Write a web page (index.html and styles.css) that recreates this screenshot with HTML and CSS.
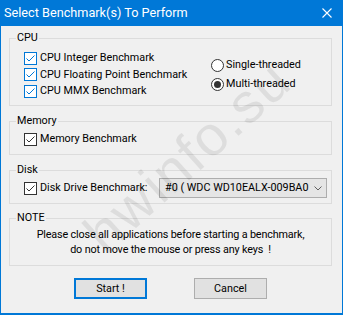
FILE: index.html
```html
<!DOCTYPE html>
<html>
<head>
<meta charset="utf-8">
<link rel="stylesheet" href="styles.css">
</head>
<body>
<div class="window">
  <header class="titlebar">
    <span class="title">Select Benchmark(s) To Perform</span>
    <svg class="close" width="10" height="10" viewBox="0 0 10 10"><path d="M0.5 0.5L9.5 9.5M9.5 0.5L0.5 9.5" stroke="#fff" stroke-width="1.1" fill="none"/></svg>
  </header>
  <main class="content">
    <fieldset class="group group-cpu">
      <legend>CPU</legend>
      <div class="cpu-body">
        <div class="checks">
          <label class="check"><svg class="box" width="13" height="13" viewBox="0 0 13 13"><rect x="0.5" y="0.5" width="12" height="12" fill="#fff" stroke="#0078d7"/><path d="M2.5 6.5L5 9L10.5 3.5" stroke="#0078d7" fill="none"/></svg><span>CPU Integer Benchmark</span></label>
          <label class="check"><svg class="box" width="13" height="13" viewBox="0 0 13 13"><rect x="0.5" y="0.5" width="12" height="12" fill="#fff" stroke="#0078d7"/><path d="M2.5 6.5L5 9L10.5 3.5" stroke="#0078d7" fill="none"/></svg><span>CPU Floating Point Benchmark</span></label>
          <label class="check"><svg class="box" width="13" height="13" viewBox="0 0 13 13"><rect x="0.5" y="0.5" width="12" height="12" fill="#fff" stroke="#0078d7"/><path d="M2.5 6.5L5 9L10.5 3.5" stroke="#0078d7" fill="none"/></svg><span>CPU MMX Benchmark</span></label>
        </div>
        <div class="radios">
          <label class="radio"><svg width="13" height="13" viewBox="0 0 13 13"><circle cx="6.5" cy="6.5" r="6" fill="#fff" stroke="#333"/></svg><span>Single-threaded</span></label>
          <label class="radio"><svg width="13" height="13" viewBox="0 0 13 13"><circle cx="6.5" cy="6.5" r="6" fill="#fff" stroke="#333"/><circle cx="6.5" cy="6.5" r="3.5" fill="#333"/></svg><span>Multi-threaded</span></label>
        </div>
      </div>
    </fieldset>

    <fieldset class="group group-mem">
      <legend>Memory</legend>
      <div class="mem-body">
        <label class="check"><svg class="box" width="13" height="13" viewBox="0 0 13 13"><rect x="0.5" y="0.5" width="12" height="12" fill="#fff" stroke="#333"/><path d="M2.5 6.5L5 9L10.5 3.5" stroke="#333" fill="none"/></svg><span>Memory Benchmark</span></label>
      </div>
    </fieldset>

    <fieldset class="group group-disk">
      <legend>Disk</legend>
      <div class="disk-body">
        <label class="check"><svg class="box" width="13" height="13" viewBox="0 0 13 13"><rect x="0.5" y="0.5" width="12" height="12" fill="#fff" stroke="#333"/><path d="M2.5 6.5L5 9L10.5 3.5" stroke="#333" fill="none"/></svg><span>Disk Drive Benchmark:</span></label>
        <div class="combo">
          <span class="combo-text">#0 ( WDC WD10EALX-009BA0</span>
          <svg class="chevron" width="8" height="5" viewBox="0 0 8 5"><path d="M0.5 0.5L4 4L7.5 0.5" stroke="#606060" fill="none"/></svg>
        </div>
      </div>
    </fieldset>

    <fieldset class="group group-note">
      <legend>NOTE</legend>
      <p class="note-text">Please close all applications before starting a benchmark,<br>do not move the mouse or press any keys&nbsp; !</p>
    </fieldset>

    <div class="buttons">
      <button class="btn btn-default">Start !</button>
      <button class="btn">Cancel</button>
    </div>
  </main>
  <div class="watermark">hwinfo.su</div>
</div>
</body>
</html>
```

FILE: styles.css
```css
html, body {
  margin: 0;
  padding: 0;
  background: #f0f0f0;
}

.window {
  position: relative;
  width: 343px;
  height: 315px;
  box-sizing: border-box;
  border: 1px solid #0078d7;
  border-top: 0;
  border-bottom-width: 2px;
  background: #f0f0f0;
  overflow: hidden;
  font-family: Roboto, "Noto Sans", sans-serif;
  font-size: 10.8px;
  color: #000;
}

.titlebar {
  height: 26px;
  background: #0078d7;
  color: #fff;
  display: flex;
  align-items: center;
  justify-content: space-between;
  padding: 0 10px 0 3px;
}

.title {
  font-size: 12.7px;
  line-height: 16px;
}

.close {
  display: block;
}

.content {
  padding: 4px 10px 0 8px;
}

.group {
  margin: 0;
  padding: 0;
  border: 1px solid #dcdcdc;
  min-width: 0;
}

.group legend {
  margin-left: 6px;
  padding: 0 1px;
  line-height: 16px;
  height: 16px;
}

.group-mem,
.group-disk {
  margin-top: 7px;
}

.group-note {
  margin-top: 6px;
}

.cpu-body {
  display: flex;
  padding: 4px 0 6px 14px;
}

.checks {
  width: 187px;
  display: grid;
  grid-auto-rows: 16px;
  row-gap: 0.5px;
}

.radios {
  display: grid;
  grid-auto-rows: 18px;
  row-gap: 1px;
  align-content: center;
}

.check,
.radio {
  display: flex;
  align-items: center;
  gap: 3px;
  white-space: nowrap;
  line-height: 16px;
}

.radio {
  gap: 2px;
}

.check svg,
.radio svg {
  display: block;
  flex: none;
}

.mem-body {
  padding: 2px 0 7px 14px;
  height: 16px;
  display: flex;
}

.disk-body {
  display: flex;
  align-items: center;
  height: 20px;
  padding: 0 4px 5px 14px;
}

.combo {
  margin-left: auto;
  width: 168px;
  height: 20px;
  box-sizing: border-box;
  border: 1px solid #adadad;
  background: #e5e5e5;
  display: flex;
  align-items: center;
  padding: 0 4px 0 5px;
  gap: 4px;
}

.combo-text {
  flex: 1;
  white-space: nowrap;
  line-height: 16px;
}

.chevron {
  display: block;
  flex: none;
}

.note-text {
  margin: 0;
  padding: 2px 0 8px;
  line-height: 14.5px;
  letter-spacing: -0.15px;
  text-align: center;
}

.buttons {
  display: flex;
  justify-content: center;
  gap: 47px;
  margin-top: 12px;
}

.btn {
  width: 73px;
  height: 21px;
  box-sizing: border-box;
  border: 1px solid #adadad;
  background: #e1e1e1;
  font-family: inherit;
  font-size: 10.8px;
  color: #000;
  padding: 0;
  margin: 0;
}

.btn-default {
  border: 2px solid #0078d7;
}

.watermark {
  position: absolute;
  left: 186px;
  top: 156px;
  transform: translate(-50%, -50%) rotate(-42deg);
  font-family: "Liberation Sans", sans-serif;
  font-size: 56px;
  letter-spacing: 2px;
  color: rgba(0, 0, 0, 0.08);
  white-space: nowrap;
  pointer-events: none;
}
```
